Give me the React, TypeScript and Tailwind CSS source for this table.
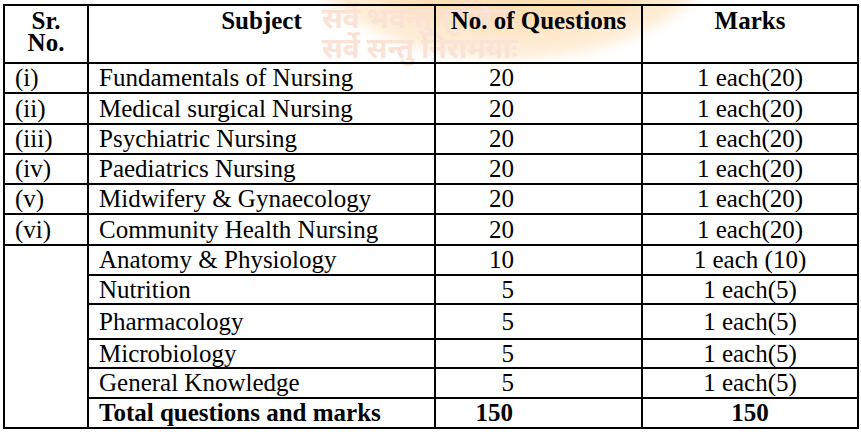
import React from "react";

type Row = { sr?: string; subject: string; q: string; marks: string };

const rows: Row[] = [
  { sr: "(i)", subject: "Fundamentals of Nursing", q: "20", marks: "1 each(20)" },
  { sr: "(ii)", subject: "Medical surgical Nursing", q: "20", marks: "1 each(20)" },
  { sr: "(iii)", subject: "Psychiatric Nursing", q: "20", marks: "1 each(20)" },
  { sr: "(iv)", subject: "Paediatrics Nursing", q: "20", marks: "1 each(20)" },
  { sr: "(v)", subject: "Midwifery & Gynaecology", q: "20", marks: "1 each(20)" },
  { sr: "(vi)", subject: "Community Health Nursing", q: "20", marks: "1 each(20)" },
  { subject: "Anatomy & Physiology", q: "10", marks: "1 each (10)" },
  { subject: "Nutrition", q: "5", marks: "1 each(5)" },
  { subject: "Pharmacology", q: "5", marks: "1 each(5)" },
  { subject: "Microbiology", q: "5", marks: "1 each(5)" },
  { subject: "General Knowledge", q: "5", marks: "1 each(5)" },
];

const cell = "border-l-2 border-t-2 border-black";
const head = `${cell} pt-[4px] text-center font-bold leading-[22px]`;

// faint logo + motto printed behind the header row
const Watermark: React.FC = () => (
  <div className="pointer-events-none absolute inset-0">
    <svg className="absolute left-0 top-0" width="861" height="120">
      <defs>
        <filter id="soft" x="-20%" y="-50%" width="140%" height="200%">
          <feGaussianBlur stdDeviation="7" />
        </filter>
      </defs>
      <ellipse cx="510" cy="-60" rx="210" ry="118" fill="#feebd2" filter="url(#soft)" />
      <ellipse cx="515" cy="-75" rx="185" ry="105" fill="#fde0b8" filter="url(#soft)" />
    </svg>
    <div className="absolute left-[322px] top-[2px] [font-family:'Noto_Sans',sans-serif] text-[28px] font-bold leading-[30px] text-[#fbe2d6]">
      <div>सर्वे भवन्तु सुखिनः</div>
      <div>सर्वे सन्तु निरामयाः</div>
    </div>
  </div>
);

export default function App() {
  return (
    <div className="relative h-[432px] w-[861px] overflow-hidden bg-white [font-family:'Liberation_Serif','Times_New_Roman',serif] text-[25px] text-black">
      <Watermark />
      <div className="relative ml-[3px] mt-[4px] grid w-fit grid-cols-[84px_347px_207px_216px] grid-rows-[58px_30px_31px_30px_30px_30px_31px_30px_29px_35px_29px_30px_30px] border-b-2 border-r-2 border-black">
        <div className={head}>
          Sr.
          <br />
          No.
        </div>
        <div className={head}>Subject</div>
        <div className={head}>No. of Questions</div>
        <div className={head}>Marks</div>

        {rows.map((r, i) => (
          <React.Fragment key={r.subject}>
            {r.sr ? (
              <div className={`${cell} flex items-center pl-[10px]`}>{r.sr}</div>
            ) : i === 6 ? (
              <div className={`${cell} row-span-6`} />
            ) : null}
            <div className={`${cell} flex items-center pl-[10px]`}>{r.subject}</div>
            <div className={`${cell} flex items-center justify-end pr-[127px]`}>{r.q}</div>
            <div className={`${cell} flex items-center justify-center`}>{r.marks}</div>
          </React.Fragment>
        ))}

        <div className={`${cell} flex items-center pl-[10px] font-bold`}>Total questions and marks</div>
        <div className={`${cell} flex items-center justify-end pr-[128px] font-bold`}>150</div>
        <div className={`${cell} flex items-center justify-center font-bold`}>150</div>
      </div>
    </div>
  );
}
